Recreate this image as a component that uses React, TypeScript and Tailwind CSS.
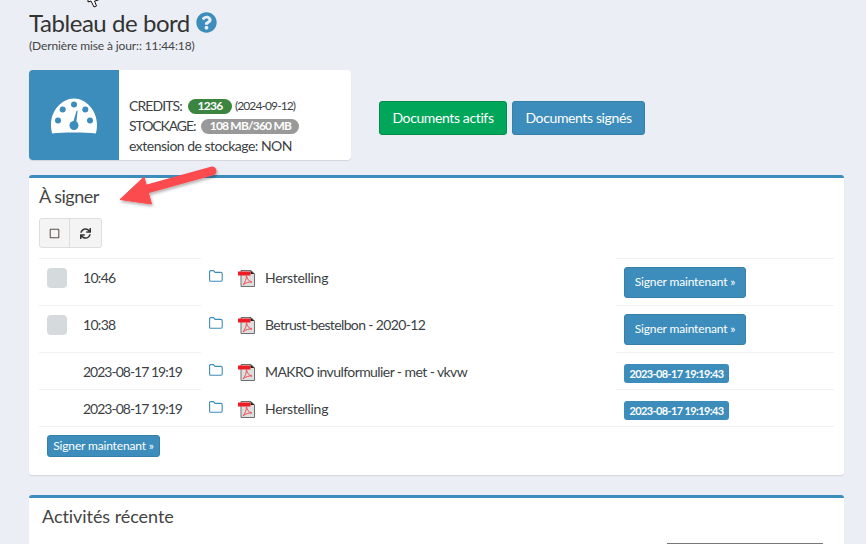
import React from "react";
import { FaQuestionCircle, FaSync, FaRegSquare } from "react-icons/fa";

const Folder = () => (
  <svg width="14" height="12" viewBox="0 0 14 12" fill="none" className="shrink-0">
    <path d="M0.6 10.2 V1.8 Q0.6 0.6 1.8 0.6 H4.6 L6 2.4 H11.8 Q13.2 2.4 13.2 3.8 V10 Q13.2 11.2 12 11.2 H1.6 Q0.6 11.2 0.6 10.2 Z" stroke="#3c8dbc" strokeWidth="1.1" strokeLinejoin="round" />
  </svg>
);

const Pdf = () => (
  <svg width="17" height="17" viewBox="0 0 17 17" className="shrink-0">
    <path d="M3 0.5 H13 L16.5 4 V16.5 H3 Z" fill="#dedede" stroke="#6f6f6f" strokeWidth="1" />
    <path d="M12.5 0.5 L16.5 4 H12.5 Z" fill="#222" />
    <rect x="0" y="1.5" width="12.5" height="4" fill="#ee1c25" />
    <path d="M8.5 5.5 C9 9 10.5 11 14 12 C11 11.8 7.5 12.5 5 15 C7 12.5 8.5 9 8.5 5.5 Z" fill="none" stroke="#ee5055" strokeWidth="1" />
  </svg>
);

const Gauge = () => (
  <svg width="46" height="37" viewBox="0 0 46 37">
    <path d="M1.2 35.5 C0.4 33 0 30 0 26.5 C0 13 10.5 0.5 23 0.5 C35.5 0.5 46 13 46 26.5 C46 30 45.6 33 44.8 35.5 C34 34.3 12 34.3 1.2 35.5 Z" fill="#fff" />
    <g fill="#3c8dbc">
      <circle cx="7" cy="22.5" r="3" />
      <circle cx="11.7" cy="11.5" r="3" />
      <circle cx="23" cy="6.5" r="3" />
      <circle cx="34.3" cy="11.5" r="3" />
      <circle cx="39" cy="22.5" r="3" />
      <circle cx="23" cy="27.5" r="4.5" />
      <path d="M21.5 26.5 L25.6 12.5 L26.6 12.7 L25 27.5 Z" />
    </g>
  </svg>
);

const Check = () => <div className="w-5 h-5 rounded bg-[#d5dbdd] mt-[-1px]" />;

function Row({ h, check, time, timeClass, name, nameClass, children }: { h: string; check?: boolean; time: string; timeClass: string; name: string; nameClass: string; children: React.ReactNode }) {
  return (
    <div className={`flex ${h}`}>
      <div className="w-[162px] shrink-0 border-t border-[#f0f2f4] pt-[9px] pl-2 flex items-start">
        <div className="w-9 shrink-0 pt-[1px]">{check && <Check />}</div>
        <span className={`whitespace-nowrap ${timeClass}`}>{time}</span>
      </div>
      <div className="flex-1 flex items-start pt-[10px] pl-2">
        <div className="w-[29px] shrink-0 pt-[2px]"><Folder /></div>
        <div className="w-[27px] shrink-0 pt-[2px]"><Pdf /></div>
        <span className={`whitespace-nowrap ${nameClass}`}>{name}</span>
      </div>
      <div className="w-[218px] shrink-0 border-t border-[#f0f2f4] pl-2 pt-2">{children}</div>
    </div>
  );
}

const SignBtn = () => (
  <button className="h-[31px] w-[122px] pb-[2px] rounded-[3px] bg-[#3c8dbc] border border-[#367fa9] text-white text-[12px] tracking-[-0.16px] whitespace-nowrap">Signer maintenant »</button>
);

const DateBadge = () => (
  <span className="inline-flex mt-[3px] h-[19px] w-[105px] items-center justify-center rounded-[3px] bg-[#3c8dbc] text-white text-[11px] font-bold tracking-[-0.63px] whitespace-nowrap">2023-08-17 19:19:43</span>
);

export default function App() {
  return (
    <div className="relative h-[544px] w-[866px] overflow-hidden bg-[#ebeff5] pl-[29px] pr-[22px] text-[14px] leading-5 text-[#3b3f44]" style={{ fontFamily: '"Lato", "Noto Sans", sans-serif' }}>
      <div className="flex items-center gap-[6px] h-[30px] mt-[7px] pt-[1px]">
        <h1 className="text-[24px] leading-[30px] text-[#333] tracking-[-0.45px]">Tableau de bord</h1>
        <FaQuestionCircle className="text-[#3c8dbc] text-[21px]" />
      </div>
      <p className="text-[12px] leading-4 mt-[1px] text-[#444] tracking-[-0.12px]">(Dernière mise à jour:: 11:44:18)</p>

      <div className="flex mt-4">
        <div className="w-[322px] h-[90px] flex bg-white rounded-sm shadow-[0_1px_1px_rgba(0,0,0,0.1)] overflow-hidden">
          <div className="w-[90px] bg-[#3c8dbc] flex items-center justify-center pt-[2px]">
            <Gauge />
          </div>
          <div className="pl-[10px] pt-[26px] whitespace-nowrap">
            <div className="flex items-center">
              <span className="tracking-[-0.9px]">CREDITS:</span>
              <span className="ml-[6px] inline-flex items-center justify-center w-[44px] h-[15px] rounded-full bg-[#3c8540] text-white text-[12px] font-bold tracking-[-0.7px]">1236</span>
              <span className="ml-[3px] text-[12px] tracking-[-0.9px]">(2024-09-12)</span>
            </div>
            <div className="flex items-center">
              <span className="tracking-[-1.1px]">STOCKAGE:</span>
              <span className="ml-[6px] inline-flex items-center justify-center w-[98px] h-[15px] rounded-full bg-[#999] text-white text-[12px] font-bold tracking-[-0.8px]">108 MB/360 MB</span>
            </div>
            <div className="tracking-[-0.5px]">extension de stockage: NON</div>
          </div>
        </div>
        <div className="flex gap-[5px] ml-7 mt-[31px]">
          <button className="h-[34px] w-[128px] rounded-[3px] bg-[#00a65a] border border-[#008d4c] text-white text-[14px] tracking-[-0.38px] whitespace-nowrap">Documents actifs</button>
          <button className="h-[34px] w-[133px] rounded-[3px] bg-[#3c8dbc] border border-[#367fa9] text-white text-[14px] tracking-[-0.38px] whitespace-nowrap">Documents signés</button>
        </div>
      </div>

      <section className="mt-[15px] h-[300px] bg-white border-t-[3px] border-[#3c8dbc] rounded-[3px] shadow-[0_1px_1px_rgba(0,0,0,0.1)] px-[10px]">
        <h2 className="text-[18px] leading-5 pt-[8px] h-[40px] text-[#444] tracking-[-0.5px]">À signer</h2>
        <div className="flex w-[63px] h-[30px] rounded-[3px] border border-[#ddd] bg-[#f4f4f4] text-[#333]">
          <div className="w-[30px] flex items-center justify-center border-r border-[#ddd]"><FaRegSquare className="text-[11px] text-[#5c4f45]" /></div>
          <div className="flex-1 flex items-center justify-center"><FaSync className="text-[11px]" /></div>
        </div>
        <div className="mt-[10px]">
          <Row h="h-[47px]" check time="10:46" timeClass="tracking-[-0.7px]" name="Herstelling" nameClass="tracking-[-0.3px]"><SignBtn /></Row>
          <Row h="h-[47px]" check time="10:38" timeClass="tracking-[-0.7px]" name="Betrust-bestelbon - 2020-12" nameClass="tracking-[-0.63px]"><SignBtn /></Row>
          <Row h="h-[37px]" time="2023-08-17 19:19" timeClass="tracking-[-1px]" name="MAKRO invulformulier - met - vkvw" nameClass="tracking-[-0.58px]"><DateBadge /></Row>
          <Row h="h-[37px]" time="2023-08-17 19:19" timeClass="tracking-[-1px]" name="Herstelling" nameClass="tracking-[-0.3px]"><DateBadge /></Row>
        </div>
        <div className="border-t border-[#f0f2f4] pt-2 pl-2">
          <button className="h-[22px] w-[113px] rounded-[3px] bg-[#3c8dbc] border border-[#367fa9] text-white text-[12px] tracking-[-0.16px] whitespace-nowrap">Signer maintenant »</button>
        </div>
      </section>

      <section className="mt-5 h-[100px] bg-white border-t-[3px] border-[#3c8dbc] rounded-[3px] px-[13px]">
        <h2 className="text-[18px] leading-5 pt-[8px] h-[45px] text-[#444] tracking-[-0.06px]">Activités récente</h2>
        <div className="flex justify-end pr-[8px]">
          <div className="w-[156px] h-[2px] bg-[#777]" />
        </div>
      </section>

      <svg className="absolute left-[110px] top-[160px] pointer-events-none" width="115" height="55" viewBox="0 0 115 55">
        <defs>
          <filter id="s" x="-20%" y="-20%" width="140%" height="150%">
            <feDropShadow dx="1" dy="2" stdDeviation="1.5" floodColor="#000" floodOpacity="0.3" />
          </filter>
        </defs>
        <g filter="url(#s)">
          <path d="M102 11 L37 29" stroke="#fb4b4f" strokeWidth="9" strokeLinecap="round" />
          <path d="M10 39.5 L34 17 L41.5 44 Z" fill="#fb4b4f" stroke="#fb4b4f" strokeWidth="1" strokeLinejoin="round" />
        </g>
      </svg>

      <svg className="absolute left-[87px] top-0" width="13" height="8" viewBox="0 0 13 8">
        <path d="M1 -4 L1 2 L4 1 L7 7 L9.5 6 L7.5 1 L11.5 0" fill="#fff" stroke="#111" strokeWidth="1" />
      </svg>
    </div>
  );
}
